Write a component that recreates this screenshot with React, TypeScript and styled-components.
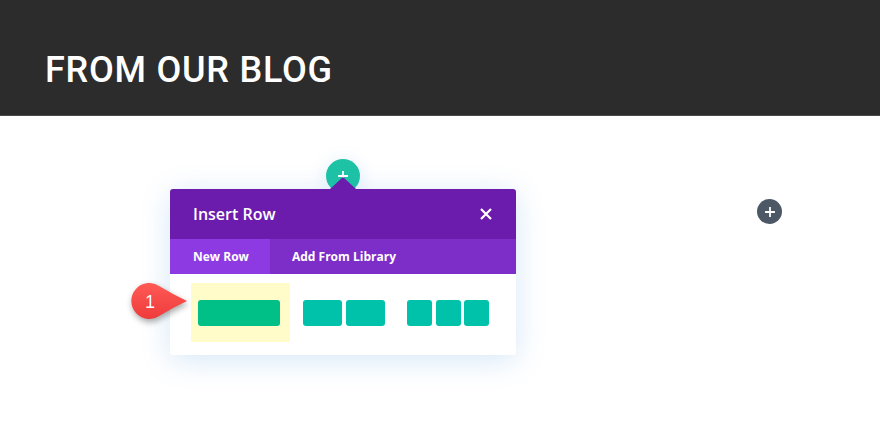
import React from "react";
import styled, { createGlobalStyle } from "styled-components";

const GlobalStyle = createGlobalStyle`
  html, body {
    margin: 0;
    padding: 0;
    background: #ffffff;
  }
  body {
    font-family: "Open Sans", "Liberation Sans", sans-serif;
  }
`;

const Page = styled.div`
  width: 880px;
  height: 432px;
  overflow: hidden;
  background: #ffffff;
`;

const Hero = styled.header`
  height: 116px;
  box-sizing: border-box;
  padding: 52px 0 0 45px;
  background: #2c2c2c;
  border-bottom: 1px solid #4a4a4a;
`;

const HeroTitle = styled.h1`
  margin: 0;
  font-family: Roboto, "Liberation Sans", sans-serif;
  font-weight: 500;
  font-size: 36px;
  line-height: 36px;
  letter-spacing: 0.75px;
  color: #ffffff;
`;

const Canvas = styled.section`
  display: flex;
  align-items: flex-start;
  padding: 43px 0 0 170px;
`;

const ModalColumn = styled.div`
  display: flex;
  flex-direction: column;
  align-items: center;
  width: 346px;
`;

const AddButton = styled.div<{ $bg: string; $size: number }>`
  width: ${(p) => p.$size}px;
  height: ${(p) => p.$size}px;
  border-radius: 50%;
  background: ${(p) => p.$bg};
  display: flex;
  align-items: center;
  justify-content: center;
  flex-shrink: 0;
`;

const TopAdd = styled(AddButton)`
  align-items: flex-start;
  padding-top: 12px;
  box-sizing: border-box;
  box-shadow: 0 2px 18px rgba(43, 135, 218, 0.15);
`;

const RowAdd = styled(AddButton)`
  margin: 40px 0 0 241px;
`;

const Modal = styled.div`
  position: relative;
  width: 346px;
  margin-top: -4px;
  border-radius: 3px;
  background: #ffffff;
  box-shadow: 0 5px 30px rgba(43, 135, 218, 0.2);

  &::before {
    content: "";
    position: absolute;
    left: 50%;
    top: -12px;
    margin-left: -13px;
    border-left: 13px solid transparent;
    border-right: 13px solid transparent;
    border-bottom: 12px solid #6b1cad;
  }
`;

const ModalHeader = styled.div`
  height: 50px;
  display: flex;
  align-items: center;
  justify-content: space-between;
  padding: 0 24px 0 23px;
  background: #6b1cad;
  border-radius: 3px 3px 0 0;
`;

const ModalTitle = styled.span`
  font-size: 16px;
  font-weight: 600;
  color: #ffffff;
`;

const Tabs = styled.div`
  display: flex;
  height: 35px;
  background: #7d2ec8;
`;

const Tab = styled.div<{ $active?: boolean }>`
  display: flex;
  align-items: center;
  box-sizing: border-box;
  width: ${(p) => (p.$active ? "100px" : "auto")};
  padding: 0 0 0 ${(p) => (p.$active ? "23px" : "22px")};
  white-space: nowrap;
  background: ${(p) => (p.$active ? "#8e3ae2" : "transparent")};
  font-size: 12px;
  font-weight: 700;
  color: #ffffff;
`;

const ModalBody = styled.div`
  display: flex;
  gap: 4.5px;
  padding: 9px 19px 13px 21px;
`;

const LayoutOption = styled.div<{ $selected?: boolean }>`
  position: relative;
  width: 99px;
  height: 59px;
  display: flex;
  align-items: center;
  justify-content: center;
  background: ${(p) => (p.$selected ? "#fffcc9" : "transparent")};
`;

const Columns = styled.div<{ $shift: number }>`
  display: flex;
  gap: 3.5px;
  width: 82px;
  margin-left: ${(p) => p.$shift}px;
`;

const Column = styled.div<{ $color: string }>`
  flex: 1;
  height: 26px;
  border-radius: 3px;
  background: ${(p) => p.$color};
`;

const Badge = styled.div`
  position: absolute;
  left: -62px;
  top: 0;
  width: 62px;
  height: 40px;
  filter: drop-shadow(1px 3px 3px rgba(0, 0, 0, 0.35));
`;

const BadgeNumber = styled.span`
  position: absolute;
  left: 11px;
  top: 0;
  width: 20px;
  line-height: 38px;
  text-align: center;
  font-family: "Liberation Sans", Arial, sans-serif;
  font-size: 18px;
  color: #ffffff;
`;

const layouts = [
  { cols: 1, color: "#00bf87", selected: true, shift: -3 },
  { cols: 2, color: "#00c2aa", shift: 0 },
  { cols: 3, color: "#00c2aa", shift: 1 },
];

function Plus({ size, stroke }: { size: number; stroke: number }) {
  return (
    <svg width={size} height={size} viewBox="0 0 10 10">
      <path
        d="M5 0.5V9.5M0.5 5H9.5"
        stroke="#ffffff"
        strokeWidth={stroke}
        strokeLinecap="round"
      />
    </svg>
  );
}

export default function App() {
  return (
    <Page>
      <GlobalStyle />
      <Hero>
        <HeroTitle>FROM OUR BLOG</HeroTitle>
      </Hero>
      <Canvas>
        <ModalColumn>
          <TopAdd $bg="#1ec3a5" $size={34}>
            <Plus size={10} stroke={1.8} />
          </TopAdd>
          <Modal>
            <ModalHeader>
              <ModalTitle>Insert Row</ModalTitle>
              <svg width="12" height="12" viewBox="0 0 12 12">
                <path
                  d="M1 1L11 11M11 1L1 11"
                  stroke="#ffffff"
                  strokeWidth="2.2"
                />
              </svg>
            </ModalHeader>
            <Tabs>
              <Tab $active>New Row</Tab>
              <Tab>Add From Library</Tab>
            </Tabs>
            <ModalBody>
              {layouts.map((l) => (
                <LayoutOption key={l.cols} $selected={l.selected}>
                  {l.selected && (
                    <Badge>
                      <svg width="62" height="40" viewBox="0 0 62 40">
                        <defs>
                          <linearGradient id="badge" x1="0" y1="0" x2="0" y2="1">
                            <stop offset="0" stopColor="#ff5a55" />
                            <stop offset="1" stopColor="#ee3b3b" />
                          </linearGradient>
                        </defs>
                        <path
                          d="M58 18 Q45 12 31 3.5 A18 18 0 1 0 31 32.5 Q45 24 58 18 Z"
                          fill="url(#badge)"
                        />
                      </svg>
                      <BadgeNumber>1</BadgeNumber>
                    </Badge>
                  )}
                  <Columns $shift={l.shift}>
                    {Array.from({ length: l.cols }).map((_, i) => (
                      <Column key={i} $color={l.color} />
                    ))}
                  </Columns>
                </LayoutOption>
              ))}
            </ModalBody>
          </Modal>
        </ModalColumn>
        <RowAdd $bg="#4c5866" $size={25}>
          <Plus size={10} stroke={1.8} />
        </RowAdd>
      </Canvas>
    </Page>
  );
}
